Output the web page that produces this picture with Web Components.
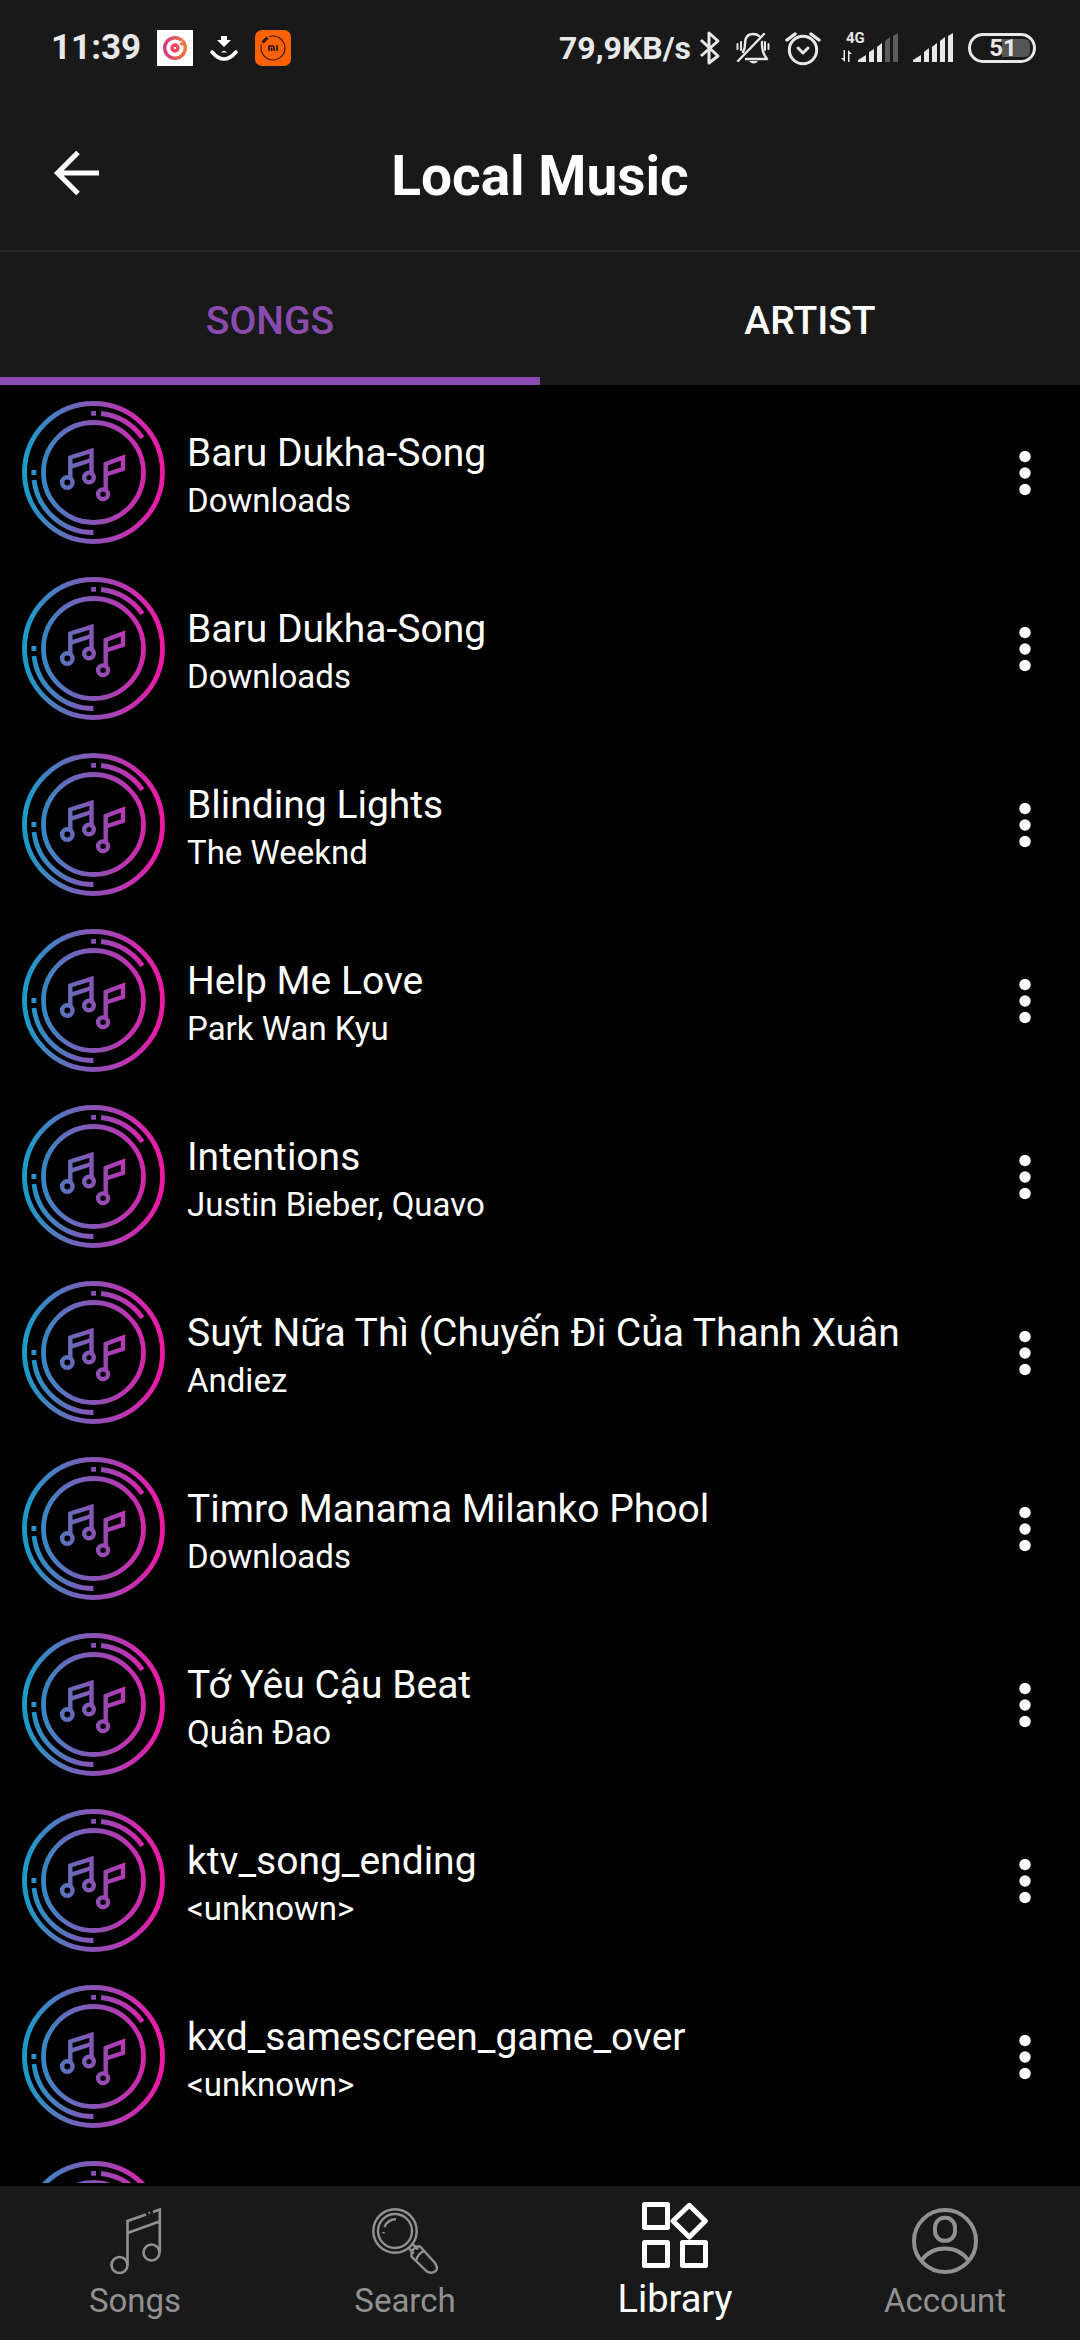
<!DOCTYPE html>
<html lang="en">
<head>
<meta charset="utf-8">
<meta name="viewport" content="width=device-width, initial-scale=1">
<title>Local Music</title>
<style>
  html, body { margin: 0; height: 100%; background: #000; }
  body { font-family: Roboto, "Noto Sans", sans-serif; color: #fff; }
</style>
</head>
<body>
<music-app>
  <status-bar slot="top"></status-bar>
  <app-header slot="top">Local Music</app-header>
  <tab-bar slot="top">
    <tab-item active>SONGS</tab-item>
    <tab-item>ARTIST</tab-item>
  </tab-bar>
  <song-row>Baru Dukha-Song<span slot="artist">Downloads</span></song-row>
  <song-row>Baru Dukha-Song<span slot="artist">Downloads</span></song-row>
  <song-row>Blinding Lights<span slot="artist">The Weeknd</span></song-row>
  <song-row>Help Me Love<span slot="artist">Park Wan Kyu</span></song-row>
  <song-row>Intentions<span slot="artist">Justin Bieber, Quavo</span></song-row>
  <song-row>Suýt Nữa Thì (Chuyến Đi Của Thanh Xuân<span slot="artist">Andiez</span></song-row>
  <song-row>Timro Manama Milanko Phool<span slot="artist">Downloads</span></song-row>
  <song-row>Tớ Yêu Cậu Beat<span slot="artist">Quân Đao</span></song-row>
  <song-row>ktv_song_ending<span slot="artist">&lt;unknown&gt;</span></song-row>
  <song-row>kxd_samescreen_game_over<span slot="artist">&lt;unknown&gt;</span></song-row>
  <song-row></song-row>
  <nav-bar slot="bottom">
    <nav-item icon="songs">Songs</nav-item>
    <nav-item icon="search">Search</nav-item>
    <nav-item icon="library" active>Library</nav-item>
    <nav-item icon="account">Account</nav-item>
  </nav-bar>
</music-app>

<script>
const define = (name, html) => {
  const template = document.createElement('template');
  template.innerHTML = html;
  customElements.define(name, class extends HTMLElement {
    constructor() {
      super();
      this.attachShadow({ mode: 'open' }).append(template.content.cloneNode(true));
    }
  });
};

define('music-app', `
<style>
  :host { display: flex; flex-direction: column; height: 100vh; overflow: hidden; background: #000; }
  header, nav { flex: none; background: #191919; }
  main { flex: 1; min-height: 0; overflow: hidden; margin-bottom: 3px; }
</style>
<header><slot name="top"></slot></header>
<main><slot></slot></main>
<nav><slot name="bottom"></slot></nav>`);

define('status-bar', `
<style>
  :host { display: flex; justify-content: space-between; align-items: center; height: 96px; padding: 0 44px 0 51px; color: #e8e8e8; }
  div { display: flex; align-items: center; }
  .left { gap: 16px; }
  .time { font-size: 35px; font-weight: 700; line-height: 40px; }
  .rate { font-size: 32px; font-weight: 700; line-height: 40px; margin-right: 8px; }
  .right { gap: 15px; }
  .speed { gap: 0; }
  svg { display: block; }
  .cell { font: 700 15px/16px Roboto, sans-serif; fill: #e8e8e8; }
  .level { font: 700 24px/24px Roboto, sans-serif; fill: #e8e8e8; }
</style>
<div class="left">
  <span class="time">11:39</span>
  <svg width="36" height="36" viewBox="0 0 36 36"><defs><linearGradient id="g"><stop stop-color="#d23a86"/><stop offset="1" stop-color="#f5793c"/></linearGradient></defs><path fill="#fff" d="M0 0h36v36H0z"/><circle cx="18" cy="18" r="10.300" fill="none" stroke="url(#g)" stroke-width="3.400"/><circle cx="18" cy="18" r="3" fill="none" stroke="#ee4363" stroke-width="3.400"/><path d="M21 14.500l4-3.500" stroke="#fff" stroke-width="1.400"/><path d="M23.500 15l4-4" stroke="#f5793c" stroke-width="3"/></svg>
  <svg width="30" height="36" viewBox="0 0 30 36" fill="#fff"><path d="M12 6h6v4h4l-7 7-7-7h4z"/><path d="M12 22.500q3-3.500 6 0z"/><path d="M3 22q12 14 24 0" fill="none" stroke="#fff" stroke-width="3.600" stroke-linecap="round"/></svg>
  <svg width="36" height="36" viewBox="0 0 36 36"><rect width="36" height="36" rx="7" fill="#ff6106"/><circle cx="18" cy="18" r="12" fill="none" stroke="#301804" stroke-width="1.100"/><path d="M6.500 14.500L14.500 7" stroke="#ff6106" stroke-width="5"/><path d="M7.500 12.500l5-5" stroke="#301804" stroke-width="3"/><path d="M14 21v-5h3.500q1.500 0 1.500 1.500V21M16.500 17.500V21M22 15v6" fill="none" stroke="#301804" stroke-width="1.700"/></svg>
</div>
<div class="right">
  <div class="speed">
    <span class="rate">79,9KB/s</span>
    <svg width="22" height="36" viewBox="0 0 22 36" fill="none" stroke="#e8e8e8" stroke-width="3" stroke-linejoin="round"><path d="M2 10l17 16-9 7V3l9 8L2 26"/></svg>
  </div>
  <svg width="34" height="36" viewBox="0 0 34 36" fill="none" stroke="#e8e8e8" stroke-width="2.400" stroke-linecap="round" stroke-linejoin="round"><path d="M2 31L28 4M7 22q2-3 2-8Q9 4 17 4q4 0 6 2M26 12q-.5 10 5 17H10"/><path d="M1.500 14v5M5 12v8M29 12v8M32.500 14v5" stroke-width="2"/><path d="M13 31h9q-4 5-9 0z" fill="#e8e8e8" stroke="none"/></svg>
  <svg width="36" height="36" viewBox="0 0 36 36" fill="none" stroke="#e8e8e8" stroke-width="3" stroke-linecap="round"><circle cx="18" cy="20" r="13.700"/><path d="M2 10l8-6M34 10l-8-6" stroke-width="3.400"/><path d="M13 18l5 5 5-5" stroke-linejoin="round"/></svg>
  <svg width="62" height="36" viewBox="0 0 62 36" fill="#e8e8e8"><text class="cell" x="10" y="13">4G</text><path d="M9 20v12l-4-4h2.500v-8zM12 32V20l4 4h-2.500v8z"/><path d="M22 32v-2l8-5v7zM33 32V22l5-3v13zM41 32V17l5-4v19z"/><path fill="#5c5c5c" d="M49 32V11l5-4v25zM57 32V6l5-3v29z"/></svg>
  <svg width="40" height="36" viewBox="0 0 40 36" fill="#e8e8e8"><path d="M0 32v-2l8-5v7zM11 32V22l5-4v14zM19 32V17l5-4v19zM27 32V11l5-4v25zM35 32V6l5-3v29z"/></svg>
  <svg width="68" height="36" viewBox="0 0 68 36"><path d="M34 9h22q6 0 6 6v6q0 6-6 6H34z" fill="#555"/><rect x="1.500" y="4.500" width="65" height="27" rx="13.500" fill="none" stroke="#e8e8e8" stroke-width="3"/><text class="level" x="35" y="26" text-anchor="middle">51</text></svg>
</div>`);

define('app-header', `
<style>
  :host { display: grid; grid-template-columns: 1fr auto 1fr; align-items: center; height: 154px; border-bottom: 2px solid #242424; }
  button { justify-self: start; margin-left: 51px; padding: 0; border: 0; background: none; }
  svg { display: block; }
  h1 { margin: 0; padding-top: 6px; font-size: 55px; font-weight: 700; line-height: 64px; }
</style>
<button aria-label="Back"><svg width="52" height="52" viewBox="0 0 52 52" fill="none" stroke="#fff" stroke-width="5"><path d="M48 26H8M27 5.500L6.500 26 27 46.500"/></svg></button>
<h1><slot></slot></h1>`);

define('tab-bar', `
<style>:host { display: flex; height: 133px; }</style><slot></slot>`);

define('tab-item', `
<style>
  :host { display: flex; flex: 1; }
  button { flex: 1; padding: 12px 0 0; border: 0; border-bottom: 8px solid transparent; background: none; color: #fff; font: 500 39px/48px Roboto, sans-serif; }
  :host([active]) button { color: #8a4baf; border-bottom-color: #8a4baf; }
</style>
<button><slot></slot></button>`);

define('song-row', `
<style>
  :host { display: flex; align-items: center; height: 176px; padding: 0 22px; }
  svg { display: block; flex: none; }
  .text { flex: 1; min-width: 0; margin-left: 21px; white-space: nowrap; }
  .title { min-height: 56px; font-size: 39px; line-height: 56px; }
  .artist { min-height: 40px; font-size: 33px; line-height: 40px; }
  button { padding: 0 25px; border: 0; background: none; }
</style>
<svg width="144" height="144" viewBox="0 0 144 144" fill="none" stroke="url(#disc)" stroke-width="4.800">
  <defs><linearGradient id="disc" gradientUnits="userSpaceOnUse" x1="0" y1="72" x2="144" y2="72"><stop stop-color="#149fc9"/><stop offset=".25" stop-color="#5278be"/><stop offset=".5" stop-color="#8b52b4"/><stop offset=".75" stop-color="#c232b0"/><stop offset="1" stop-color="#f216a4"/></linearGradient></defs>
  <circle cx="71.500" cy="71.500" r="69"/>
  <circle cx="71.500" cy="71.500" r="50"/>
  <path d="M79 12.500A59.500 59.500 0 0 1 120.500 36.800M12 79A59.500 59.500 0 0 0 71.500 131.500M69.200 12.300h4.800M9.500 71.500h4.800"/>
  <g stroke-width="4.400"><circle cx="45.300" cy="81.500" r="5.200"/><circle cx="67" cy="76.500" r="4.800"/><circle cx="81" cy="93.300" r="4.900"/>
  <path d="M48.300 77V56.500L69.500 49.800V73M48.300 65.800L69.500 59M83.700 88V63L101 56.500V68L83.700 73.500"/></g>
</svg>
<div class="text"><div class="title"><slot></slot></div><div class="artist"><slot name="artist"></slot></div></div>
<button aria-label="More options"><svg width="16" height="48" viewBox="0 0 16 48" fill="#fff"><circle cx="8" cy="7.500" r="5.700"/><circle cx="8" cy="24" r="5.700"/><circle cx="8" cy="40.500" r="5.700"/></svg></button>`);

define('nav-bar', `
<style>:host { display: flex; height: 154px; }</style><slot></slot>`);

const navIcons = {
  songs: `<g stroke-width="2.600"><circle cx="17.500" cy="57" r="8"/><circle cx="49.500" cy="44.500" r="8"/><path d="M25.500 57V13L44 6.500M51 4l6.800-2.500V44.500M25.500 25l32-11.500"/><path d="M46.500 5.200l1.600-.6"/></g>`,
  search: `<g stroke-width="2.400"><circle cx="23" cy="23" r="21.700"/><circle cx="23" cy="23" r="17"/><path d="M12.500 19A11.500 11.500 0 0 1 24 11.300M11.500 24v1.500M37 40.500l5 5M41 36.500l5 5M39.500 48.500V43l5-4.500H48L63 55Q67 61 63 63.500T55 63.500ZM44.500 52q1-6 7.500-9"/></g>`,
  library: `<path stroke-width="5" stroke-linejoin="round" d="M2.500 2.500H25.500V25.500H2.500zM2.500 40.500H25.500V63.500H2.500zM40.500 40.500H63.500V63.500H40.500zM47.300 3.300L63.300 19 47.300 35 31 19z"/>`,
  account: `<g stroke-width="4"><circle cx="33" cy="33" r="31"/><rect x="23" y="9.800" width="20" height="23" rx="9.500"/><path d="M9.500 52.500Q18 40.500 33 40.500T56.500 52.500"/></g>`
};

customElements.define('nav-item', class extends HTMLElement {
  constructor() {
    super();
    this.attachShadow({ mode: 'open' }).innerHTML = `
<style>
  :host { display: flex; flex: 1; color: #919191; }
  a { display: flex; flex: 1; flex-direction: column; align-items: center; padding-top: 22px; color: inherit; text-decoration: none; font-size: 33px; line-height: 54px; }
  svg { display: block; }
  :host([active]) { color: #fff; }
  :host([active]) a { padding-top: 16px; font-size: 38px; line-height: 62px; }
</style>
<a href="#"><svg width="66" height="66" viewBox="0 0 66 66" fill="none" stroke="currentColor">${navIcons[this.getAttribute('icon')]}</svg><slot></slot></a>`;
  }
});
</script>
</body>
</html>
